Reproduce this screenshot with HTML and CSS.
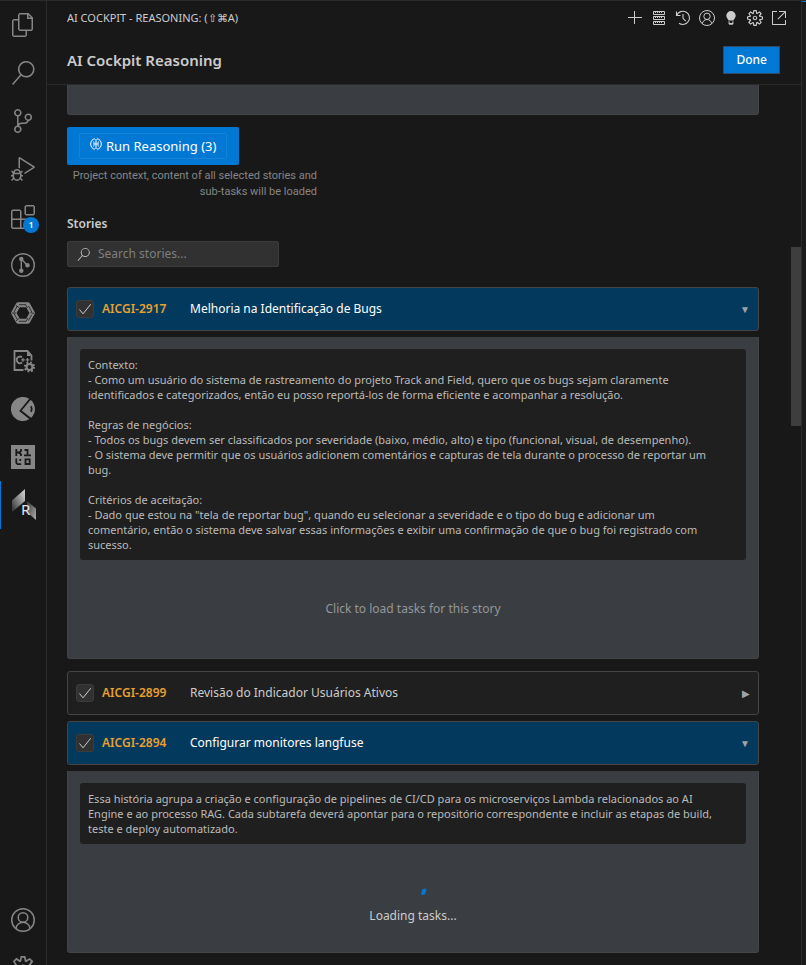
FILE: index.html
```html
<!DOCTYPE html>
<html lang="en">

    <head>
        <meta charset="UTF-8">
        <meta name="viewport" content="width=device-width, initial-scale=1.0">
        <title>AI Cockpit Reasoning</title>
        <link rel="stylesheet" href="styles.css">
    </head>

    <body>
        <svg class="defs" aria-hidden="true">
            <symbol id="icon-account" viewBox="0 0 16 16">
                <g fill="none" stroke="currentColor">
                    <circle cx="8" cy="8" r="7.5" />
                    <circle cx="8" cy="6.3" r="3.2" />
                    <path d="M3.3 13.8c.3-2.5 2.3-4.3 4.7-4.3s4.4 1.8 4.7 4.3" />
                </g>
            </symbol>
            <symbol id="icon-gear" viewBox="1 1 14 14">
                <path fill-rule="evenodd" d="M9.1 4.4L8.6 2H7.4l-.5 2.4-.7.3-2-1.3-.9.8 1.3 2-.2.7-2.4.5v1.2l2.4.5.3.8-1.3 2 .8.8 2-1.3.8.3.4 2.3h1.2l.5-2.4.8-.3 2 1.3.8-.8-1.3-2 .3-.8 2.3-.4V7.4l-2.4-.5-.3-.8 1.3-2-.8-.8-2 1.3-.7-.2zM9.4 1l.5 2.4L12 2.1l2 2-1.4 2.1 2.4.4v2.8l-2.4.5L14 12l-2 2-2.1-1.4-.5 2.4H6.6l-.5-2.4L4 13.9l-2-2 1.4-2.1L1 9.4V6.6l2.4-.5L2.1 4l2-2 2.1 1.4.4-2.4h2.8zm.6 7c0 1.1-.9 2-2 2s-2-.9-2-2 .9-2 2-2 2 .9 2 2zM8 9c.6 0 1-.4 1-1s-.4-1-1-1-1 .4-1 1 .4 1 1 1z" />
            </symbol>
            <symbol id="icon-search" viewBox="0 0 24 24">
                <path d="M15.25 0a8.25 8.25 0 0 0-6.18 13.72L1 22.88l1.12 1 8.05-9.12A8.251 8.251 0 1 0 15.25.01V0zm0 15a6.75 6.75 0 1 1 0-13.5 6.75 6.75 0 0 1 0 13.5z" />
            </symbol>
            <symbol id="icon-check" viewBox="0 0 18 18">
                <path fill="none" stroke="currentColor" d="M3.5 9.5L7 13.8l7.8-9.6" />
            </symbol>
        </svg>

        <div class="container">
            <nav class="activity-bar" aria-label="Views">
                <div class="activity-group">
                    <button class="activity-item" aria-label="Explorer">
                        <svg viewBox="0 0 24 24"><path d="M17.5 0h-9L7 1.5V6H2.5L1 7.5v15.07L2.5 24h12.07L16 22.57V18h4.7l1.3-1.43V4.5L17.5 0zm0 2.12l2.38 2.38H17.5V2.12zm-3 20.38h-12v-15H7v9.07L8.5 18h6v4.5zm6-6h-12v-15H16V6h4.5v10.5z" /></svg>
                    </button>
                    <button class="activity-item" aria-label="Search">
                        <svg><use href="#icon-search" /></svg>
                    </button>
                    <button class="activity-item" aria-label="Source control">
                        <svg viewBox="0 0 24 24"><path d="M21.007 8.222A3.738 3.738 0 0 0 15.045 5.2a3.737 3.737 0 0 0 1.156 6.583 2.988 2.988 0 0 1-2.668 1.67h-2.99a4.456 4.456 0 0 0-2.989 1.165V7.4a3.737 3.737 0 1 0-1.494 0v9.117a3.776 3.776 0 1 0 1.816.099 2.99 2.99 0 0 1 2.668-1.667h2.99a4.484 4.484 0 0 0 4.223-3.039 3.736 3.736 0 0 0 3.25-3.687zM4.565 3.738a2.242 2.242 0 1 1 4.484 0 2.242 2.242 0 0 1-4.484 0zm4.484 16.441a2.242 2.242 0 1 1-4.484 0 2.242 2.242 0 0 1 4.484 0zm8.221-9.715a2.242 2.242 0 1 1 0-4.485 2.242 2.242 0 0 1 0 4.485z" /></svg>
                    </button>
                    <button class="activity-item" aria-label="Run and debug">
                        <svg viewBox="0 0 24 24"><path d="M10.94 13.5l-1.32 1.32a3.73 3.73 0 0 0-7.24 0L1.06 13.5 0 14.56l1.72 1.72-.22.22V18H0v1.5h1.5v.08c.077.489.214.966.41 1.42L0 22.94 1.06 24l1.65-1.65A4.308 4.308 0 0 0 6 24a4.31 4.31 0 0 0 3.29-1.65L10.94 24 12 22.94 10.09 21c.198-.464.336-.951.41-1.45v-.1H12V18h-1.5v-1.5l-.22-.22L12 14.56l-1.06-1.06zM6 13.5a2.25 2.25 0 0 1 2.25 2.25h-4.5A2.25 2.25 0 0 1 6 13.5zm3 6a3.33 3.33 0 0 1-3 3 3.33 3.33 0 0 1-3-3v-2.25h6v2.25zm14.76-9.9v1.26L13.5 17.37V15.6l8.5-5.37L9 2v9.46a5.07 5.07 0 0 0-1.5-.72V.63L8.64 0l15.12 9.6z" /></svg>
                    </button>
                    <button class="activity-item" aria-label="Extensions">
                        <svg viewBox="0 0 24 24"><path d="M13.5 1.5L15 0h7.5L24 1.5V9l-1.5 1.5H15L13.5 9V1.5zm1.5 0V9h7.5V1.5H15zM0 15V6l1.5-1.5H9L10.5 6v7.5H18l1.5 1.5v7.5L18 24H1.5L0 22.5V15zm9-1.5V6H1.5v7.5H9zM9 15H1.5v7.5H9V15zm1.5 7.5H18V15h-7.5v7.5z" /></svg>
                        <span class="badge">1</span>
                    </button>
                    <button class="activity-item" aria-label="Git graph">
                        <svg viewBox="0 0 24 24">
                            <g fill="none" stroke="currentColor" stroke-width="1.4">
                                <circle cx="12" cy="12" r="11.3" />
                                <path d="M10.3 6v12M10.3 6l6.2 6.5" />
                            </g>
                            <circle cx="10.3" cy="6" r="2.2" />
                            <circle cx="10.3" cy="17.8" r="2.2" />
                            <circle cx="16.5" cy="12.3" r="2.2" />
                        </svg>
                    </button>
                    <button class="activity-item" aria-label="Assistant">
                        <svg viewBox="0 0 24 24">
                            <path fill="none" stroke="currentColor" stroke-width="5" stroke-linejoin="round" d="M7.3 3.7h9.4L21.3 12l-4.6 8.3H7.3L2.7 12z" />
                            <path class="icon-cut" stroke-width="0.8" d="M8 3.7h7M17.5 5l3.3 6M20.8 13.5l-3.3 6M15 20.3H8M6.3 18.5l-3.3-6M3 11l3.3-6M5 4.5l3 2M14.5 3.7l2 3M23 12.5l-3.5-1M15 20.5l2-3.5M8 17.5l-3 2.5M1 12h4" />
                        </svg>
                    </button>
                    <button class="activity-item" aria-label="C++ tools">
                        <svg viewBox="0 0 24 24">
                            <g fill="none" stroke="currentColor" stroke-width="1.8">
                                <path d="M12.5 21H3.5V2h13l4 4.500v5" />
                                <path d="M11 8.300a3.300 3.300 0 1 0 0 5.200" />
                                <path stroke-width="1.2" d="M10.2 10.900h3.600M12 9.100v3.600M14.700 10.900h3.600M16.500 9.100v3.600" />
                                <circle cx="18.500" cy="18" r="3" stroke-width="2.200" />
                                <circle cx="18.500" cy="18" r="4.600" stroke-width="2" stroke-dasharray="1.810 1.800" />
                            </g>
                            <path d="M16 1.500l5 5.500h-5z" />
                        </svg>
                    </button>
                    <button class="activity-item" aria-label="Inspector">
                        <svg viewBox="0 0 24 24">
                            <path d="M18.5 2A12 12 0 1 0 18.5 22L9.5 14.5z" />
                            <path d="M19.5 2.800L9 13.800l11 7.200A12 12 0 0 0 19.500 2.800z" />
                            <path class="icon-cut" stroke-width="1.8" d="M19.6 1.500L9.500 13.800l10.700 8.400M20 9.300q1.500 2.700 0 5.400" />
                        </svg>
                    </button>
                    <button class="activity-item" aria-label="Kilo">
                        <svg viewBox="0 0 24 24">
                            <path d="M0 0h24v24H0z" />
                            <path class="icon-cut" stroke-width="1.8" d="M5.300 4v7M10 4v2l-2 1.500L10 9.300V11M5.300 7.500h3M13.500 5h3v5.300M13 10.300h7M5.300 13.500v4.200l1.200 1.500h3.700M9.300 14v2M14.500 14.300h4.200v4.700h-4.200z" />
                        </svg>
                    </button>
                    <button class="activity-item activity-item-active" aria-label="AI Cockpit">
                        <svg viewBox="0 0 24 32">
                            <defs>
                                <linearGradient id="shade" x1="1" y1="0" x2="0" y2="1">
                                    <stop offset="0.15" stop-color="#c4c4c4" />
                                    <stop offset="1" stop-color="#2c2c2c" />
                                </linearGradient>
                                <linearGradient id="shade-low" x1="0" y1="0" x2="1" y2="1">
                                    <stop offset="0" stop-color="#333" />
                                    <stop offset="1" stop-color="#b0b0b0" />
                                </linearGradient>
                            </defs>
                            <path fill="url(#shade)" d="M13 0v12L0 23V11.500z" />
                            <path fill="url(#shade-low)" d="M15 12l9 7.500V31l-9-8z" />
                            <text x="9" y="26" font-size="15" font-weight="400" fill="#e4e4e4">R</text>
                        </svg>
                    </button>
                </div>
                <div class="activity-group activity-group-bottom">
                    <button class="activity-item" aria-label="Accounts">
                        <svg><use href="#icon-account" /></svg>
                    </button>
                    <button class="activity-item" aria-label="Manage">
                        <svg><use href="#icon-gear" /></svg>
                    </button>
                </div>
            </nav>

            <main class="panel">
                <div class="panel-bar">
                    <span>AI COCKPIT - REASONING: (⇧⌘A)</span>
                    <div class="panel-actions">
                        <button aria-label="New">
                            <svg viewBox="0 0 16 16"><path d="M15 7v1H8v6H7V8H1V7h6V1h1v6z" /></svg>
                        </button>
                        <button aria-label="Servers">
                            <svg viewBox="0 0 16 16">
                                <path fill="none" stroke="currentColor" d="M2.500 1.500h11v3h-11zM2.500 6.500h11v3h-11zM2.500 11.500h11v3h-11z" />
                                <path fill="none" stroke="currentColor" stroke-dasharray="1 1" d="M4 2.500h8M4 7.500h8M4 12.500h8" />
                            </svg>
                        </button>
                        <button aria-label="History">
                            <svg viewBox="0 0 16 16"><path fill="none" stroke="currentColor" stroke-width="1.1" d="M1.500 1.500v4h4M1.800 5.200A6.600 6.600 0 1 1 4 13.200M8 4v4.300l2.800 2.800" /></svg>
                        </button>
                        <button aria-label="Account">
                            <svg><use href="#icon-account" /></svg>
                        </button>
                        <button aria-label="Tips">
                            <svg viewBox="0 0 16 16"><path d="M8 1a4.700 4.700 0 0 0-4.700 4.700c0 2 1.600 3 2.200 4.800h5c.6-1.800 2.200-2.800 2.200-4.800A4.700 4.700 0 0 0 8 1zM5.600 11.300h1V13h2.800v-1.700h1V14l-.9.800h-3l-.9-.8z" /></svg>
                        </button>
                        <button aria-label="Settings">
                            <svg><use href="#icon-gear" /></svg>
                        </button>
                        <button aria-label="Open in editor">
                            <svg viewBox="0 0 16 16"><path d="M1.500 1H6v1H2v12h12v-4h1v4.500l-.5.5h-13l-.5-.5v-13l.5-.5zM15 1.500V8h-1V2.700L7.200 9.500l-.7-.7L13.300 2H8V1h6.500l.5.5z" /></svg>
                        </button>
                    </div>
                </div>

                <header class="panel-header">
                    <h1>AI Cockpit Reasoning</h1>
                    <button class="done-button">Done</button>
                </header>

                <div class="content">
                    <div class="previous-panel"></div>

                    <button class="run-button">
                        <span class="run-label">
                            <svg viewBox="0 0 12 12"><path fill="none" stroke="currentColor" d="M6 1v10M5 .8C2.500 1 .7 3 .7 6S2.500 11 5 11.200M7 .8c2.500.2 4.300 2.200 4.300 5.200S9.500 11 7 11.200M3.500 3.500C4.500 5 4 8 3.500 8.500M8.500 3.500C7.500 5 8 8 8.500 8.500M4.500 6h3" /></svg>
                            Run Reasoning (3)
                        </span>
                    </button>
                    <p class="hint">Project context, content of all selected stories and sub-tasks will be loaded</p>

                    <h2>Stories</h2>
                    <label class="search">
                        <svg><use href="#icon-search" /></svg>
                        <input type="text" placeholder="Search stories..." aria-label="Search stories">
                    </label>

                    <div class="story story-open">
                        <div class="check">
                            <input type="checkbox" id="story2917" checked>
                            <svg><use href="#icon-check" /></svg>
                        </div>
                        <label class="story-key" for="story2917">AICGI-2917</label>
                        <span class="story-title">Melhoria na Identificação de Bugs</span>
                        <button class="toggle" aria-label="Collapse">▼</button>
                    </div>
                    <section class="details">
                        <div class="description">Contexto:
- Como um usuário do sistema de rastreamento do projeto Track and Field, quero que os bugs sejam claramente
identificados e categorizados, então eu posso reportá-los de forma eficiente e acompanhar a resolução.

Regras de negócios:
- Todos os bugs devem ser classificados por severidade (baixo, médio, alto) e tipo (funcional, visual, de desempenho).
- O sistema deve permitir que os usuários adicionem comentários e capturas de tela durante o processo de reportar um
bug.

Critérios de aceitação:
- Dado que estou na "tela de reportar bug", quando eu selecionar a severidade e o tipo do bug e adicionar um
comentário, então o sistema deve salvar essas informações e exibir uma confirmação de que o bug foi registrado com
sucesso.</div>
                        <p class="load-tasks">Click to load tasks for this story</p>
                    </section>

                    <div class="story">
                        <div class="check">
                            <input type="checkbox" id="story2899" checked>
                            <svg><use href="#icon-check" /></svg>
                        </div>
                        <label class="story-key" for="story2899">AICGI-2899</label>
                        <span class="story-title">Revisão do Indicador Usuários Ativos</span>
                        <button class="toggle" aria-label="Expand">▶</button>
                    </div>

                    <div class="story story-open">
                        <div class="check">
                            <input type="checkbox" id="story2894" checked>
                            <svg><use href="#icon-check" /></svg>
                        </div>
                        <label class="story-key" for="story2894">AICGI-2894</label>
                        <span class="story-title">Configurar monitores langfuse</span>
                        <button class="toggle" aria-label="Collapse">▼</button>
                    </div>
                    <section class="details">
                        <div class="description">Essa história agrupa a criação e configuração de pipelines de CI/CD para os microserviços Lambda relacionados ao AI
Engine e ao processo RAG. Cada subtarefa deverá apontar para o repositório correspondente e incluir as etapas de build,
teste e deploy automatizado.</div>
                        <div class="loading">
                            <svg viewBox="0 0 28 24"><path d="M23.500 5l3-.5 1 1.500-1.500 4.500-3 .5-1-1.500z" /></svg>
                            <span>Loading tasks...</span>
                        </div>
                    </section>
                </div>

                <div class="scroll-thumb"></div>
            </main>

            <div class="editor-edge"></div>
        </div>
    </body>

</html>
```

FILE: styles.css
```css
html {
    height: 100%;
}

body {
    margin: 0px;
    height: 100%;
    overflow: hidden;
    font-family: "Noto Sans", sans-serif;
    font-size: 12px;
    line-height: 16px;
    background: #181818;
    color: #cccccc;
}

body * {
    box-sizing: border-box;
}

button,
input {
    margin: 0px;
    padding: 0px;
    font: inherit;
    color: inherit;
    background: none;
    border: none;
}

button {
    cursor: pointer;
}

svg {
    display: block;
    fill: currentColor;
}

h1,
h2,
p {
    margin: 0px;
}

.defs {
    position: absolute;
    width: 0px;
    height: 0px;
}

.container {
    display: flex;
    height: 100%;
    border-top: 1px solid #2b2b2b;
}

/* activity bar */
.activity-bar {
    display: flex;
    flex-direction: column;
    justify-content: space-between;
    flex: none;
    width: 47px;
    overflow: hidden;
    border-right: 1px solid #2b2b2b;
    color: #868686;
}

.activity-group-bottom {
    height: 69px;
    flex: none;
    overflow: hidden;
}

.activity-item {
    position: relative;
    display: flex;
    align-items: center;
    justify-content: center;
    width: 100%;
    height: 48px;
}

.activity-item svg {
    width: 24px;
    height: 24px;
}

.activity-item-active {
    border-left: 1px solid #0078d4;
}

.activity-item-active svg {
    height: 32px;
}

.icon-cut {
    fill: none;
    stroke: #181818;
}

.badge {
    position: absolute;
    right: 7px;
    bottom: 8px;
    width: 16px;
    height: 16px;
    border-radius: 8px;
    background: #0078d4;
    color: #ffffff;
    font-size: 9px;
    font-weight: 600;
    text-align: center;
}

/* panel */
.panel {
    position: relative;
    display: flex;
    flex-direction: column;
    flex: 1;
    min-width: 0px;
    overflow: hidden;
}

.panel-bar {
    display: flex;
    align-items: center;
    justify-content: space-between;
    flex: none;
    height: 34px;
    padding: 0px 14px 0px 20px;
    font-size: 11px;
}

.panel-actions {
    display: flex;
    gap: 8px;
}

.panel-actions svg {
    width: 16px;
    height: 16px;
}

.panel-header {
    display: flex;
    align-items: center;
    justify-content: space-between;
    flex: none;
    height: 50px;
    padding: 0px 21px 0px 20px;
    border-bottom: 1px solid #2b2b2b;
}

h1 {
    font-size: 15px;
    font-weight: 600;
}

.done-button {
    height: 28px;
    padding: 0px 12px;
    border: 1px solid #2f4a63;
    background: #0078d4;
    color: #ffffff;
    font-weight: 500;
}

.content {
    flex: 1;
    min-height: 0px;
    overflow: hidden;
    padding: 0px 42px 0px 20px;
}

.previous-panel {
    height: 30px;
    margin-bottom: 12px;
    background: #3a3d41;
    border: 1px solid #454545;
    border-top: none;
    border-radius: 0px 0px 3px 3px;
}

.run-button {
    display: block;
    padding: 6px 12px;
    border-radius: 2px;
    background: #0078d4;
    color: #ffffff;
    font-size: 13px;
}

.run-label {
    display: flex;
    align-items: center;
    gap: 4px;
    height: 26px;
    padding: 0px 10px;
    border: 1px solid #1683d8;
    border-radius: 2px;
}

.run-label svg {
    width: 12px;
    height: 12px;
    margin-bottom: 4px;
}

.hint {
    width: 250px;
    margin-top: 3px;
    color: #868686;
    font-family: Roboto, sans-serif;
    font-size: 11px;
    text-align: right;
}

h2 {
    margin: 16px 0px 9px 0px;
    font-size: 12px;
    font-weight: 600;
}

.search {
    display: flex;
    align-items: center;
    gap: 8px;
    width: 212px;
    height: 26px;
    margin-bottom: 20px;
    padding: 0px 9px;
    border: 1px solid #3c3c3c;
    border-radius: 2px;
    background: #313131;
}

.search svg {
    flex: none;
    width: 13px;
    height: 13px;
}

.search input {
    flex: 1;
    min-width: 0px;
    outline: none;
}

.search input::placeholder {
    color: #7f7f7f;
}

/* stories */
.story {
    display: flex;
    align-items: center;
    height: 44px;
    margin-bottom: 6px;
    padding: 0px 8px;
    border: 1px solid #454545;
    border-radius: 3px;
    background: #1f1f1f;
}

.story-open {
    background: #04395e;
}

.story-open .story-title {
    color: #ffffff;
}

.check {
    display: grid;
    width: 18px;
    height: 18px;
    margin-right: 8px;
}

.check input,
.check svg {
    grid-area: 1 / 1;
    width: 18px;
    height: 18px;
}

.check input {
    appearance: none;
    border: 1px solid #3c3c3c;
    border-radius: 3px;
    background: #313131;
}

.check svg {
    pointer-events: none;
}

.story-key {
    width: 88px;
    color: #e8a030;
    font-weight: 600;
}

.story-title {
    flex: 1;
}

.toggle {
    color: #a0a4a8;
    font-size: 10px;
}

.details {
    margin-bottom: 12px;
    padding: 12px;
    border: 1px solid #454545;
    border-top: none;
    border-radius: 0px 0px 3px 3px;
    background: #3a3d41;
}

.description {
    padding: 8px;
    border-radius: 3px;
    background: #1f1f1f;
    color: #bbbbbb;
    font-size: 11px;
    line-height: 15px;
    white-space: pre-wrap;
}

.load-tasks {
    padding: 41px 0px 29px 0px;
    color: #96979a;
    text-align: center;
}

.loading {
    display: flex;
    flex-direction: column;
    align-items: center;
    padding: 40px 0px 16px 0px;
}

.loading svg {
    width: 28px;
    height: 24px;
    color: #0078d4;
}

.scroll-thumb {
    position: absolute;
    top: 246px;
    right: 0px;
    width: 10px;
    height: 179px;
    background: #3e3e3e;
}

.editor-edge {
    flex: none;
    width: 5px;
    border-left: 1px solid #2b2b2b;
    background: #1b1b1b;
}

.editor-edge::before {
    content: "";
    display: block;
    height: 1px;
    background: #0078d4;
}
```
